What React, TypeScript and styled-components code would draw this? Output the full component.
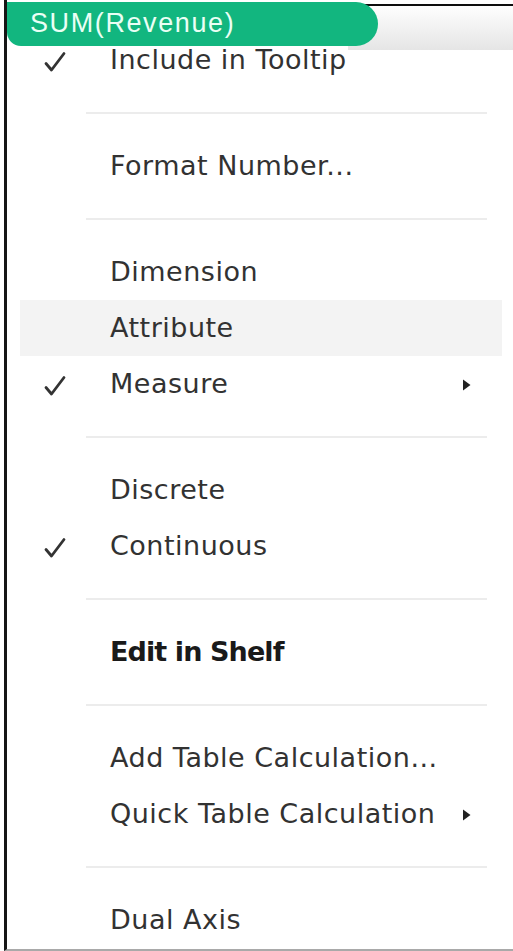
import React from 'react';
import styled, {createGlobalStyle} from 'styled-components';

const GlobalStyle = createGlobalStyle`
  html, body { margin: 0; padding: 0; background: #fff; }
  body { font-family: "DejaVu Sans", "Open Sans", sans-serif; overflow: hidden; }
`;

type Item =
  | {kind: 'sep'}
  | {kind: 'item', label: string, checked?: boolean, submenu?: boolean, bold?: boolean, hover?: boolean};

const ITEMS: Item[] = [
  {kind: 'item', label: 'Include in Tooltip', checked: true},
  {kind: 'sep'},
  {kind: 'item', label: 'Format Number...'},
  {kind: 'sep'},
  {kind: 'item', label: 'Dimension'},
  {kind: 'item', label: 'Attribute', hover: true},
  {kind: 'item', label: 'Measure', checked: true, submenu: true},
  {kind: 'sep'},
  {kind: 'item', label: 'Discrete'},
  {kind: 'item', label: 'Continuous', checked: true},
  {kind: 'sep'},
  {kind: 'item', label: 'Edit in Shelf', bold: true},
  {kind: 'sep'},
  {kind: 'item', label: 'Add Table Calculation...'},
  {kind: 'item', label: 'Quick Table Calculation', submenu: true},
  {kind: 'sep'},
  {kind: 'item', label: 'Dual Axis'},
];

function Check() {
  return (
    <svg width="24" height="22" viewBox="0 0 24 22">
      <path d="M3 12.5 L8.5 19 L21 2.5" fill="none" stroke="#333" strokeWidth="2.8"
        strokeLinecap="round" strokeLinejoin="round"/>
    </svg>
  );
}

function Caret() {
  return (
    <svg width="9" height="12" viewBox="0 0 9 12">
      <path d="M1 0.5 L8.5 6 L1 11.5 Z" fill="#222"/>
    </svg>
  );
}

export default function App() {
  return (
    <>
      <GlobalStyle/>
      <Frame>
        <Header>
          <Pill>SUM(Revenue)</Pill>
          <HeaderFill/>
        </Header>
        <Menu>
          {ITEMS.map((it, i) => it.kind === 'sep'
            ? <Separator key={i}><Rule/></Separator>
            : (
              <Row key={i} $hover={it.hover}>
                <Mark>{it.checked ? <Check/> : null}</Mark>
                <Label $bold={it.bold}>{it.label}</Label>
                {it.submenu ? <Arrow><Caret/></Arrow> : null}
              </Row>
            ))}
        </Menu>
      </Frame>
    </>
  );
}

const Frame = styled.div`
  position: relative;
  margin-left: 4px;
  height: 949px;
  border-left: 3px solid #161616;
  border-bottom: 2px solid #a9a9a9;
  overflow: hidden;
  display: flex;
  flex-direction: column;
`;

const Header = styled.div`
  position: relative;
  z-index: 1;
  display: flex;
  align-items: flex-start;
  height: 48px;
  flex: 0 0 auto;
`;

const Pill = styled.div`
  position: relative;
  z-index: 1;
  flex: 0 0 auto;
  width: 371px;
  height: 44px;
  margin-top: 2px;
  box-sizing: border-box;
  padding: 6px 0 0 23px;
  background: #12b67f;
  border-radius: 0 22px 22px 14px;
  color: #eafff5;
  font-family: "Liberation Sans", Arial, sans-serif;
  font-size: 27px;
  line-height: 30px;
  letter-spacing: 1.6px;
`;

const HeaderFill = styled.div`
  flex: 1 1 auto;
  margin-left: -30px;
  margin-top: 4px;
  height: 44px;
  border-top: 2px solid #0d0d0d;
  background: linear-gradient(#fefefe, #f4f4f4 40%, #e5e5e5);
`;

const Menu = styled.div`
  margin-top: -16px;
  display: flex;
  flex-direction: column;
`;

const Row = styled.div<{$hover?: boolean}>`
  display: flex;
  align-items: center;
  height: 56px;
  margin: 0 11px 0 13px;
  background: ${p => p.$hover ? '#f3f3f3' : 'transparent'};
`;

const Mark = styled.div`
  width: 90px;
  flex: 0 0 auto;
  display: flex;
  padding-left: 23px;
  box-sizing: border-box;
  padding-top: 3px;
`;

const Label = styled.div<{$bold?: boolean}>`
  flex: 1 1 auto;
  font-size: 27px;
  line-height: 32px;
  letter-spacing: ${p => p.$bold ? '-0.9px' : '0.5px'};
  font-weight: ${p => p.$bold ? 700 : 400};
  color: ${p => p.$bold ? '#1a1a1a' : '#323232'};
  white-space: nowrap;
`;

const Arrow = styled.div`
  flex: 0 0 auto;
  width: 40px;
  display: flex;
  padding-top: 2px;
`;

const Separator = styled.div`
  height: 50px;
  display: flex;
  align-items: center;
  padding: 0 26px 0 79px;
`;

const Rule = styled.div`
  flex: 1;
  height: 2px;
  background: #ececec;
`;
